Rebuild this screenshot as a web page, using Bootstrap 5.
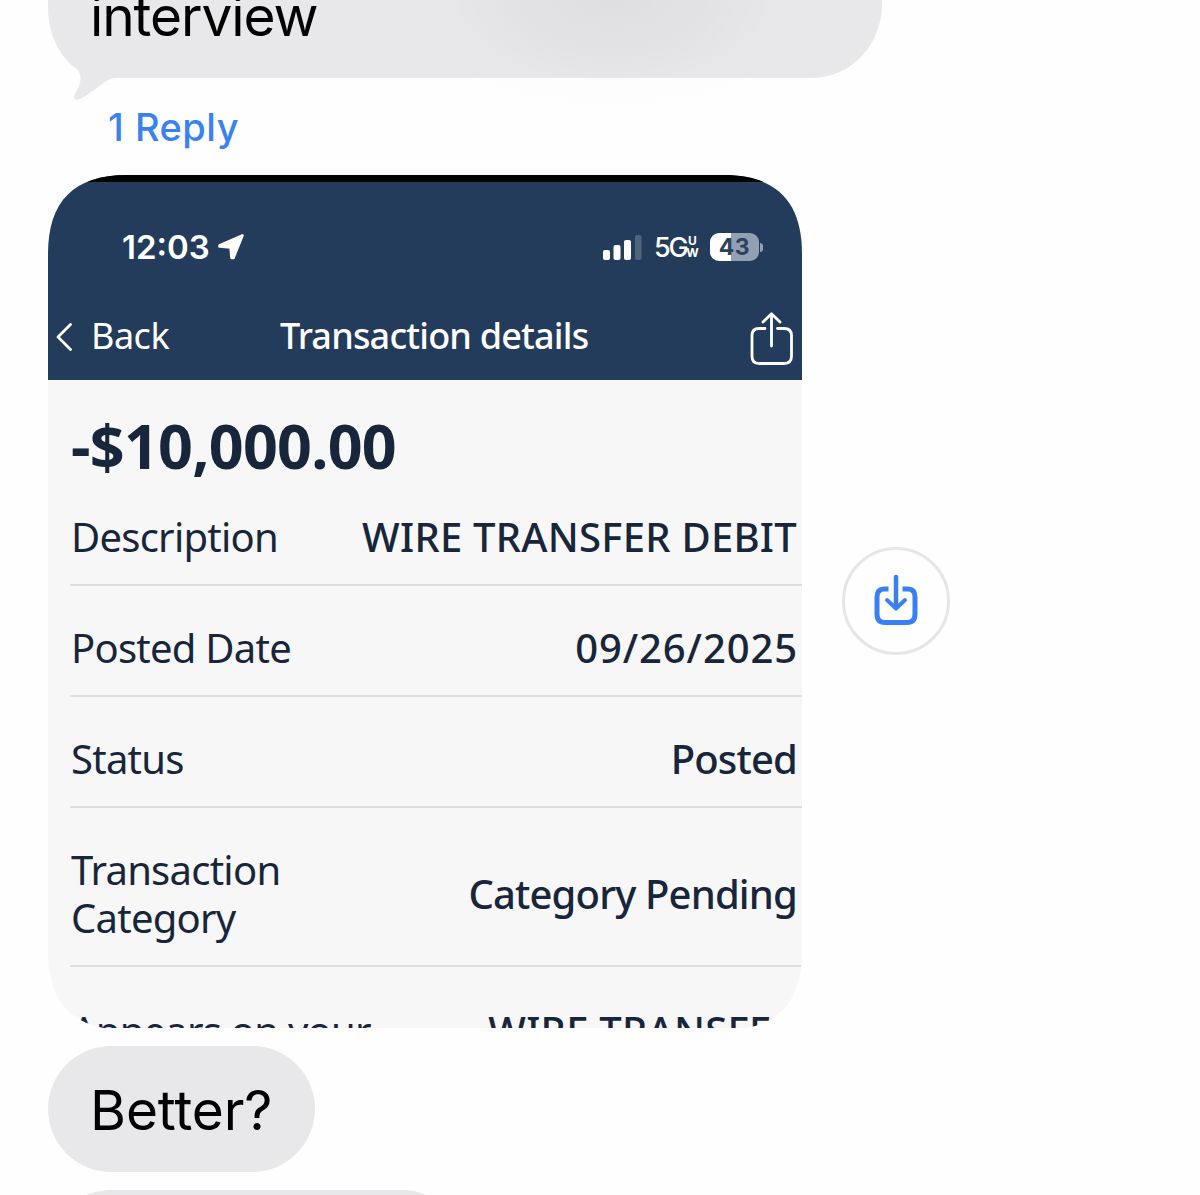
<!DOCTYPE html>
<html lang="en">
<head>
<meta charset="utf-8">
<meta name="viewport" content="width=device-width, initial-scale=1">
<title>Messages</title>
<link href="https://cdn.jsdelivr.net/npm/bootstrap@5.3.0/dist/css/bootstrap.min.css" rel="stylesheet">
<style>
  body { background: #fefefe; color: #000; font-family: Inter, "Liberation Sans", sans-serif; }
  svg { display: block; flex: none; }
  .screen { width: 1200px; height: 1195px; padding-left: 48px; }
  .bubble { background: #e8e8ea; font-size: 55px; line-height: 66px; white-space: nowrap; }
  .bubble-first { width: 834px; height: 78px; border-radius: 0 0 70px 56px / 0 0 74px 70px; padding-left: 42px; }
  .bubble-first .words { margin-top: -17px; letter-spacing: -1.1px; }
  .tail { left: 20px; top: 56px; }
  .top-shade { left: 372px; top: 0; width: 480px; height: 125px;
    background: radial-gradient(ellipse 50% 100% at 50% 0, rgba(0,0,0,.038), rgba(0,0,0,.022) 40%, rgba(0,0,0,.004) 68%, transparent); }
  .reply-line { height: 97px; padding: 26px 0 0 60px; font-size: 38px; line-height: 46px; font-weight: 500; color: #3b82f1; letter-spacing: .5px; }
  .photo-row { height: 853px; gap: 40px; }
  .photo { width: 754px; height: 853px; background: #f7f7f8; color: #17263a; font-family: "Noto Sans", "Open Sans", sans-serif;
    clip-path: path("M0 79 C0 26 26 0 79 0 H675 C728 0 754 26 754 79 V776 C754 829 728 855 675 855 H79 C26 855 0 829 0 776 Z"); }
  .photo-head { background: #243c5b; border-top: 7px solid #000; height: 205px; color: #fff; }
  .status-line { height: 130px; padding: 0 39px 0 74px; font-family: Inter, sans-serif; }
  .clock { font-size: 33px; font-weight: 600; line-height: 40px; }
  .net { width: 33px; font-size: 27px; font-weight: 500; line-height: 32px; letter-spacing: -2.2px; margin: 2px 0 0 12px; }
  .net-sub { font-size: 12px; font-weight: 700; line-height: 12px; width: 11px; }
  .battery { width: 49px; height: 28px; border-radius: 9px; background: linear-gradient(90deg, #fff 43%, #93a0b1 43%);
    color: #2b415f; font-size: 23px; font-weight: 700; line-height: 28px; letter-spacing: .5px; margin-left: 12px; }
  .battery-cap { width: 3px; height: 9px; border-radius: 0 4px 4px 0; background: #93a0b1; margin-left: 1px; }
  .title-line { height: 53px; padding: 0 9px 0 8px; font-size: 36px; line-height: 43px; }
  .title-line .words { padding-bottom: 6px; white-space: nowrap; }
  .back-arrow { margin-bottom: 4px; }
  .back { width: 189px; margin-left: 19px; letter-spacing: -.5px; }
  .heading { font-weight: 500; letter-spacing: -.8px; }
  .amount { height: 95px; padding: 35px 0 0 23px; font-size: 61px; line-height: 61px; font-weight: 700; letter-spacing: -.75px; }
  .detail { margin-left: 22px; padding: 38px 5px 23.5px 1px; border-bottom: 2px solid #dddee0; font-size: 40px; line-height: 47.5px; white-space: nowrap; letter-spacing: -.75px; }
  .detail:last-child { padding-top: 40px; }
  .detail .value { font-weight: 550; text-align: right; letter-spacing: -.85px; }
  .detail .value-caps { letter-spacing: .25px; }
  .detail .value-date { letter-spacing: .9px; margin-right: -1px; }
  .save { width: 108px; height: 108px; border: 3px solid #e6e6e9; margin-top: -1px; }
  .save svg { margin-bottom: 2px; }
  .bubble-pill { height: 126px; border-radius: 63px; padding: 31px 0 0 42px; }
  .better { width: 267px; margin-top: 18px; letter-spacing: -.1px; }
  .next { width: 417px; margin-top: 18px; }
</style>
<script src="https://cdn.jsdelivr.net/npm/bootstrap@5.3.0/dist/js/bootstrap.bundle.min.js"></script>
</head>
<body>
<main class="screen overflow-hidden position-relative">
  <div class="bubble bubble-first position-relative d-flex align-items-start">
    <span class="words">interview</span>
    <svg class="tail position-absolute" width="50" height="46" viewBox="0 0 50 46"><path fill="#e8e8ea" d="M4 8 C10 13 15 19 11.500 28 C10 34 6 38 6 41.500 C7 44.500 10 44 14 42 C24 37 35 26 42 23 C45 22 47 22 50 22 V0 H4Z"/></svg>
  </div>
  <div class="top-shade position-absolute"></div>
  <div class="reply-line">1 Reply</div>

  <div class="photo-row d-flex align-items-center">
    <section class="photo overflow-hidden">
      <header class="photo-head">
        <div class="status-line d-flex align-items-center">
          <span class="clock">12:03</span>
          <svg class="ms-2" width="26" height="26" viewBox="0 0 26 26"><path fill="#fff" stroke="#fff" stroke-width="2.500" stroke-linejoin="round" d="M24.500 1.500 L1.500 11.500 L1.500 12.500 L12.500 13.500 L13.500 24 L15.500 24Z"/></svg>
          <svg class="ms-auto" width="39" height="25" viewBox="0 0 39 25"><g fill="#fff"><rect x="0" y="15" width="7" height="10" rx="2"/><rect x="10.500" y="10" width="7" height="15" rx="2"/><rect x="21" y="5" width="7" height="20" rx="2"/><rect x="32" y="0" width="6.500" height="25" rx="2" opacity=".2"/></g></svg>
          <span class="net">5G</span><span class="net-sub d-flex flex-column align-items-center"><span>U</span><span>W</span></span>
          <span class="battery text-center">43</span><span class="battery-cap"></span>
        </div>
        <div class="title-line d-flex align-items-center">
          <svg class="back-arrow" width="16" height="28" viewBox="0 0 16 28"><path fill="none" stroke="#fff" stroke-width="2.800" stroke-linecap="round" stroke-linejoin="round" d="M14.500 1.500 L2 14 L14.500 26.500"/></svg>
          <span class="words back">Back</span>
          <span class="words heading">Transaction details</span>
          <svg class="ms-auto" width="43" height="53" viewBox="0 0 43 53"><g fill="none" stroke="#fff" stroke-width="2.800" stroke-linecap="round" stroke-linejoin="round"><path d="M15 16.500 H9 Q2 16.500 2 23.500 V44 Q2 51.500 9 51.500 H34 Q41.500 51.500 41.500 44 V23.500 Q41.500 16.500 34 16.500 H27.500"/><path d="M21.500 34 V2 M13 10 L21.500 1.800 L30 10"/></g></svg>
        </div>
      </header>
      <div class="amount">-$10,000.00</div>
      <div class="detail d-flex justify-content-between align-items-center"><span>Description</span><span class="value value-caps">WIRE TRANSFER DEBIT</span></div>
      <div class="detail d-flex justify-content-between align-items-center"><span>Posted Date</span><span class="value value-date">09/26/2025</span></div>
      <div class="detail d-flex justify-content-between align-items-center"><span>Status</span><span class="value">Posted</span></div>
      <div class="detail d-flex justify-content-between align-items-center"><span>Transaction<br>Category</span><span class="value">Category Pending</span></div>
      <div class="detail d-flex justify-content-between align-items-center"><span>Appears on your</span><span class="value value-caps">WIRE TRANSFER</span></div>
    </section>
    <div class="save rounded-circle d-flex align-items-center justify-content-center">
      <svg width="44" height="52" viewBox="0 0 44 52"><g fill="none" stroke="#3981f2" stroke-linecap="round" stroke-linejoin="round"><path stroke-width="5" stroke-linecap="butt" d="M14.500 15 H10 Q3 15 3 23 V40 Q3 48.500 11 48.500 H33 Q41 48.500 41 40 V23 Q41 15 34 15 H28.500"/><path stroke-width="4.500" d="M22 3 V34"/><path stroke-width="4" d="M13 26 L22 34.500 L31 26"/></g></svg>
    </div>
  </div>

  <div class="bubble bubble-pill better">Better?</div>
  <div class="bubble bubble-pill next"></div>
</main>
</body>
</html>
